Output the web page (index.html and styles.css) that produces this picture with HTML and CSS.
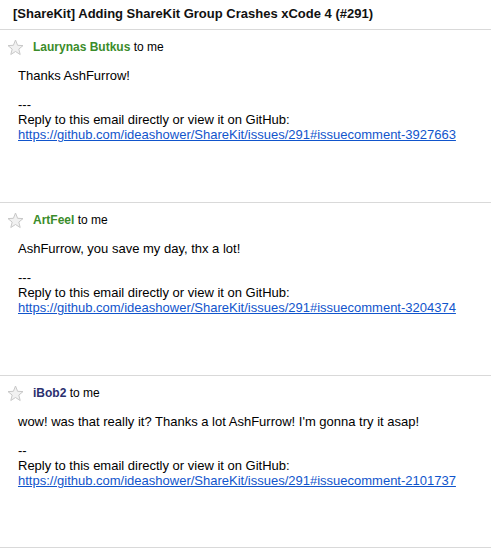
FILE: index.html
```html
<!DOCTYPE html>
<html>
<head>
<meta charset="utf-8">
<link rel="stylesheet" href="styles.css">
</head>
<body>
<div class="title">[ShareKit] Adding ShareKit Group Crashes xCode 4 (#291)</div>

<div class="msg">
  <div class="head">
    <svg class="star" width="17" height="17" viewBox="0 0 17 17"><polygon points="8.5,1 10.6,6.3 16,6.6 11.8,10.1 13.2,15.5 8.5,12.5 3.8,15.5 5.2,10.1 1,6.6 6.4,6.3" fill="#f1f1f1" stroke="#c8c8c8" stroke-width="1"/></svg>
    <span class="name green">Laurynas Butkus</span>&nbsp;to me
  </div>
  <div class="body">
    <div>Thanks AshFurrow!</div>
    <div class="blank"></div>
    <div>---</div>
    <div>Reply to this email directly or view it on GitHub:</div>
    <div><a href="#">https://github.com/ideashower/ShareKit/issues/291#issuecomment-3927663</a></div>
  </div>
</div>

<div class="msg">
  <div class="head">
    <svg class="star" width="17" height="17" viewBox="0 0 17 17"><polygon points="8.5,1 10.6,6.3 16,6.6 11.8,10.1 13.2,15.5 8.5,12.5 3.8,15.5 5.2,10.1 1,6.6 6.4,6.3" fill="#f1f1f1" stroke="#c8c8c8" stroke-width="1"/></svg>
    <span class="name green">ArtFeel</span>&nbsp;to me
  </div>
  <div class="body">
    <div>AshFurrow, you save my day, thx a lot!</div>
    <div class="blank"></div>
    <div>---</div>
    <div>Reply to this email directly or view it on GitHub:</div>
    <div><a href="#">https://github.com/ideashower/ShareKit/issues/291#issuecomment-3204374</a></div>
  </div>
</div>

<div class="msg">
  <div class="head">
    <svg class="star" width="17" height="17" viewBox="0 0 17 17"><polygon points="8.5,1 10.6,6.3 16,6.6 11.8,10.1 13.2,15.5 8.5,12.5 3.8,15.5 5.2,10.1 1,6.6 6.4,6.3" fill="#f1f1f1" stroke="#c8c8c8" stroke-width="1"/></svg>
    <span class="name navy">iBob2</span>&nbsp;to me
  </div>
  <div class="body">
    <div>wow! was that really it? Thanks a lot AshFurrow! I'm gonna try it asap!</div>
    <div class="blank"></div>
    <div>--</div>
    <div>Reply to this email directly or view it on GitHub:</div>
    <div><a href="#">https://github.com/ideashower/ShareKit/issues/291#issuecomment-2101737</a></div>
  </div>
</div>
</body>
</html>
```

FILE: styles.css
```css
html, body {
  margin: 0;
  padding: 0;
  background: #ffffff;
}
body {
  font-family: "Liberation Sans", Arial, sans-serif;
  font-size: 13px;
  color: #000;
}
.title {
  height: 29px;
  box-sizing: border-box;
  padding: 6px 0 0 13px;
  font-weight: bold;
  font-size: 13px;
  line-height: 16px;
  color: #111;
}
.msg {
  border-top: 1px solid #d9d9d9;
  height: 173px;
  box-sizing: border-box;
}
.msg:last-child {
  border-bottom: 1px solid #d9d9d9;
}
.head {
  display: flex;
  align-items: center;
  padding: 9px 0 0 7px;
  height: 16px;
  font-size: 12px;
  line-height: 16px;
}
.star {
  margin-right: 9px;
  flex: none;
}
.name {
  font-weight: bold;
}
.green { color: #3b8c2b; }
.navy { color: #2b2f6e; }
.body {
  padding: 13px 0 0 18px;
  line-height: 15px;
  font-size: 13px;
}
.blank { height: 14px; }
.body a {
  color: #1155cc;
  text-decoration: underline;
}
```
